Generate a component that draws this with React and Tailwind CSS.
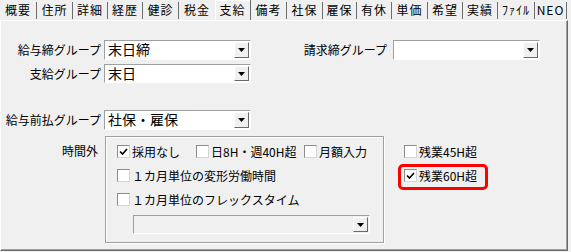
import React from "react";

const tabs = [
  ["概要", 37], ["住所", 36], ["詳細", 35], ["経歴", 35], ["健診", 36], ["税金", 36],
  ["支給", 36], ["備考", 36], ["社保", 36], ["雇保", 34], ["有休", 35], ["単価", 36],
  ["希望", 35], ["実績", 35], ["ﾌｧｲﾙ", 37], ["NEO", 32],
];
const ACTIVE = 6;

function Arrow() {
  return (
    <svg width="7" height="4" viewBox="0 0 7 4">
      <polygon points="0,0 7,0 3.5,4" fill="#000" />
    </svg>
  );
}

function Select({ value, w, h = 20, disabled = false }) {
  return (
    <div
      className={`flex border border-[#a0a0a0] border-b-white border-r-white ${disabled ? "bg-[#f0f0f0]" : "bg-white"}`}
      style={{ width: w, height: h }}
    >
      <div className="flex-1 pl-[3px] text-[14px] leading-[17px] pt-[0px] text-black whitespace-nowrap">{value}</div>
      <div className="my-[1px] mr-[1px] w-[15px] flex items-center justify-center bg-[#f0f0f0] border border-white border-r-[#696969] border-b-[#696969]">
        <Arrow />
      </div>
    </div>
  );
}

function Check({ checked, label, w }) {
  return (
    <div className="flex items-center h-[13px] gap-[2px]" style={w ? { width: w } : undefined}>
      <div className="w-[13px] h-[13px] shrink-0 bg-white border border-[#8c8c8c] border-b-[#d4d4d4] border-r-[#d4d4d4] flex items-center justify-center">
        {checked && (
          <svg width="9" height="8" viewBox="0 0 9 8">
            <path d="M1 3.5 L3.5 6 L8 1" stroke="#000" strokeWidth="1.6" fill="none" />
          </svg>
        )}
      </div>
      <span className="text-[12px] leading-[13px] text-black whitespace-nowrap">{label}</span>
    </div>
  );
}

export default function App() {
  return (
    <div className="w-[571px] h-[252px] bg-[#f0f0f0] overflow-hidden font-['Noto_Sans_CJK_JP','Noto_Sans',sans-serif] text-black">
      {/* tabs */}
      <div className="flex h-[20px]">
        {tabs.map(([t, w], i) => {
          const active = i === ACTIVE;
          const noSep = i === ACTIVE - 1;
          return (
            <div
              key={t}
              className={`relative flex items-center h-[20px] ${active ? "border-r border-r-[#696969] shadow-[inset_1px_1px_0_#fff] z-10" : ""}`}
              style={{ width: w }}
            >
              <span className="flex-1 text-center text-[12px] leading-[14px] tracking-[1px] whitespace-nowrap">{t}</span>
              {!active && !noSep && <div className="w-px h-[17px] bg-[#6e6e6e] self-end mb-[1px]" />}
            </div>
          );
        })}
      </div>
      {/* panel */}
      <div className="w-[568px] h-[231px] border-t border-l border-white border-r border-b border-r-[#696969] border-b-[#696969] shadow-[inset_-1px_-1px_0_#a0a0a0]">
        <div className="flex items-center mt-[19px] h-[20px]">
          <div className="w-[100px] text-right text-[12px] leading-[14px]">給与締グループ</div>
          <div className="ml-[3px]"><Select value="末日締" w={147} /></div>
          <div className="w-[136px] text-right text-[12px] leading-[14px]">請求締グループ</div>
          <div className="ml-[6px]"><Select value="" w={147} /></div>
        </div>
        <div className="flex items-center mt-[4px] h-[19px]">
          <div className="w-[100px] text-right text-[12px] leading-[14px]">支給グループ</div>
          <div className="ml-[3px]"><Select value="末日" w={147} h={19} /></div>
        </div>
        <div className="flex items-center mt-[27px] h-[20px]">
          <div className="w-[100px] text-right text-[12px] leading-[14px]">給与前払グループ</div>
          <div className="ml-[3px]"><Select value="社保・雇保" w={147} /></div>
        </div>
        <div className="flex items-start mt-[6px]">
          <div className="w-[97px] text-right text-[12px] leading-[14px] pt-[8px]">時間外</div>
          <div className="ml-[7px] w-[279px] h-[107px] border border-[#a0a0a0] shadow-[inset_1px_1px_0_#fff,1px_1px_0_#fff] pt-[8px] pl-[11px]">
            <div className="flex">
              <Check checked label="採用なし" w={79} />
              <Check label="日8H・週40H超" w={108} />
              <Check label="月額入力" />
            </div>
            <div className="mt-[11px]">
              <Check label="１カ月単位の変形労働時間" />
            </div>
            <div className="mt-[11px]">
              <Check label="１カ月単位のフレックスタイム" />
            </div>
            <div className="mt-[9px] ml-[16px]">
              <Select value="" w={237} h={19} disabled />
            </div>
          </div>
          <div className="ml-[14px] pt-[9px] flex flex-col">
            <div className="pl-[6px]">
              <Check label="残業45H超" />
            </div>
            <div className="mt-[6px] w-[90px] h-[26px] border-[3px] border-[#ff0000] rounded-[5px] pl-[3px] pt-[2px]">
              <Check checked label="残業60H超" />
            </div>
          </div>
        </div>
      </div>
    </div>
  );
}
